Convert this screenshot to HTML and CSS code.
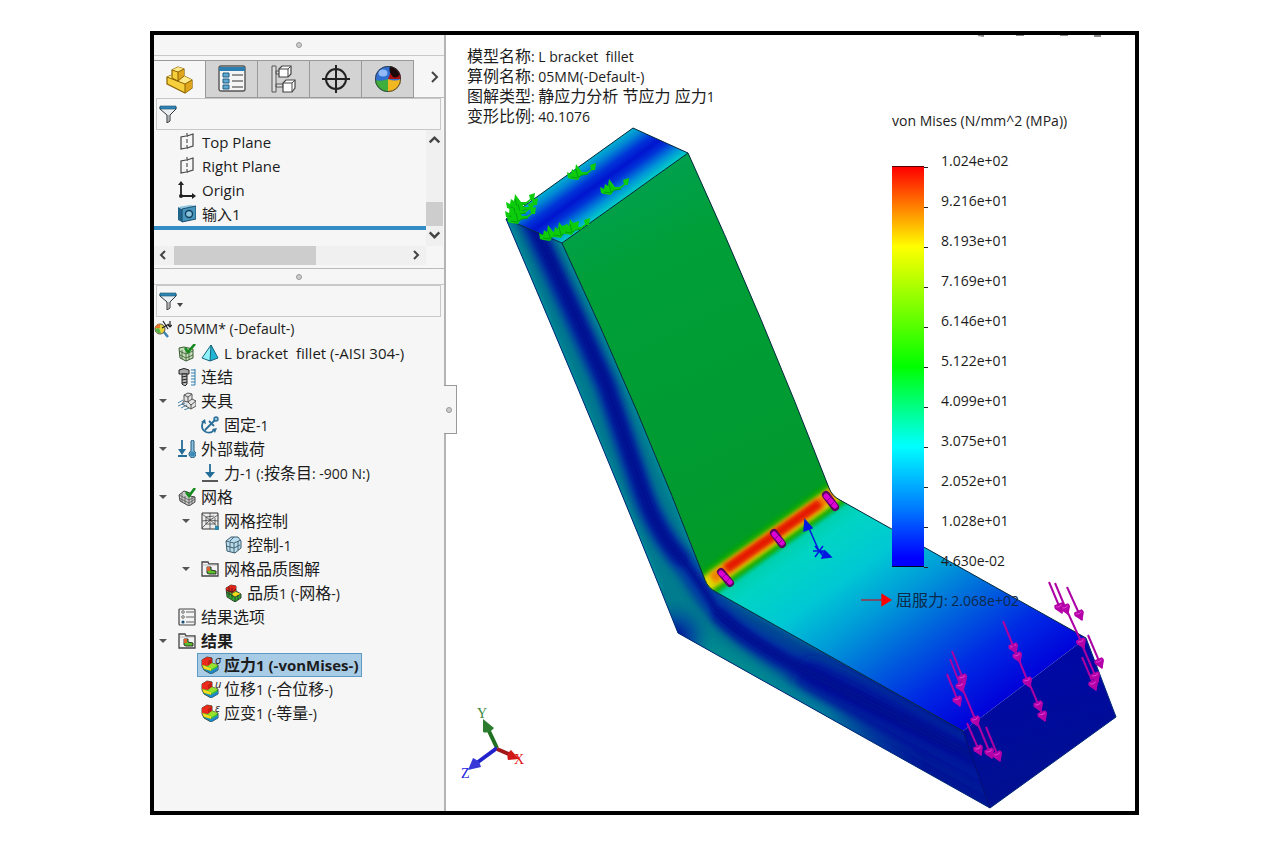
FILE: index.html
```html
<!DOCTYPE html>
<html lang="zh-CN">
<head>
    <meta charset="UTF-8">
    <meta name="viewport" content="width=device-width, initial-scale=1.0">
    <title>L bracket fillet</title>
    <link rel="stylesheet" href="styles.css">
</head>
<body>
    <!-- Icon sprite -->
    <svg class="sprite" aria-hidden="true">
        <symbol id="i-part" viewBox="0 0 28 28">
            <path d="M6 4l6-3 6 2v7l8 4v8l-7 5L1 18v-7l5-2z" fill="#f6cf3c" stroke="#8a6200" stroke-width="1.2" stroke-linejoin="round"/>
            <path d="M6 4l6-3 6 2-6 3zM1 11l5-2v3l6 3 6-5 8 4-7 4z" fill="#fde98a"/>
            <path d="M19 18l7-4v8l-7 5zM12 6l6-3v7l-6 5z" fill="#dfa51c"/>
            <path d="M6 4l6 2v9M12 6l6-3M1 11l18 7v9M19 18l7-4M6 9v3l6 3 6-5" fill="none" stroke="#8a6200"/>
        </symbol>
        <symbol id="i-list" viewBox="0 0 28 28">
            <rect x="1" y="1" width="26" height="25" rx="2" fill="#f4f4f4" stroke="#555" stroke-width="1.4"/>
            <path d="M1 2h26v4H1z" fill="#2a7fb0"/>
            <path d="M5 8h6v4H5zM5 14h6v4H5zM5 20h6v4H5z" fill="#5fa8cf" stroke="#1f5c85"/>
            <path d="M14 10h11M14 16h11M14 22h11" stroke="#333" stroke-width="1.2"/>
        </symbol>
        <symbol id="i-config" viewBox="0 0 28 28">
            <path d="M2 1h4v26H2zM6 6h5v3H6zM6 19h7v3H6z" fill="#ddd" stroke="#555"/>
            <path d="M9 4l3-3h9v8l-3 3H9zM13 18l3-3h9v8l-3 4h-9z" fill="#fff" stroke="#444" stroke-width="1.2"/>
            <path d="M9 4h9v8M18 4l3-3M13 18h9v9M22 18l3-3" fill="none" stroke="#444"/>
        </symbol>
        <symbol id="i-target" viewBox="0 0 28 28">
            <circle cx="14" cy="14" r="10" fill="none" stroke="#222" stroke-width="2"/>
            <path d="M14 0v28M0 14h28" stroke="#222" stroke-width="2"/>
        </symbol>
        <symbol id="i-sphere" viewBox="0 0 28 28">
            <circle cx="14" cy="14" r="13" fill="#2f6fd0"/>
            <path d="M14 14L19 2a13 13 0 0 1 8 12z" fill="#b01010"/>
            <path d="M16 1a13 13 0 0 1 10 8q-3 5-7 3-5-5-3-11z" fill="#1b0808"/>
            <path d="M1 15q7 2 13-1v13A13 13 0 0 1 1 15z" fill="#3fae3c"/>
            <path d="M14 14q7 3 13 0a13 13 0 0 1-13 13z" fill="#f2b822"/>
            <ellipse cx="9" cy="8" rx="4.5" ry="3.5" fill="#a9ccff" opacity=".8"/>
            <circle cx="14" cy="14" r="12.6" fill="none" stroke="#333" stroke-width=".8"/>
        </symbol>
        <symbol id="i-filter" viewBox="0 0 18 18">
            <path d="M1 2h16v2l-6 6v6l-3 2v-8L1 4z" fill="#e8eef2" stroke="#333" stroke-linejoin="round"/>
            <path d="M1 1h16v3H1z" fill="#2d86b5" stroke="#1c4f6c" stroke-width=".6"/>
            <path d="M9 10v7" stroke="#777"/>
        </symbol>
        <symbol id="i-plane" viewBox="0 0 18 18">
            <path d="M8 3L3 4v12l5-1M9 3l6-2v12l-6 2" fill="none" stroke="#444" stroke-width="1.2"/>
            <path d="M9 0v18" stroke="#333" stroke-dasharray="4 2"/>
        </symbol>
        <symbol id="i-origin" viewBox="0 0 18 18">
            <path d="M3 3v12h12" fill="none" stroke="#222" stroke-width="1.8"/>
            <path d="M0 4l3-4 3 4zM14 12l4 3-4 3z" fill="#222"/>
            <circle cx="3" cy="15" r="2" fill="#222"/>
        </symbol>
        <symbol id="i-import" viewBox="0 0 18 18">
            <path d="M0 2l4 2v13l-4-2z" fill="#22658c"/>
            <path d="M0 2l12-2 6 1-14 3z" fill="#8cc4de"/>
            <path d="M4 4l14-3v13L4 17z" fill="#4795bd" stroke="#174d6d"/>
            <circle cx="11" cy="9" r="3.5" fill="#8cc4de" stroke="#123f5c" stroke-width="1.4"/>
        </symbol>
        <symbol id="i-study" viewBox="0 0 18 18">
            <path d="M9 11l5 6" stroke="#3b82b5" stroke-width="2.5"/>
            <circle cx="6" cy="9" r="5" fill="#e8d43a" stroke="#555"/>
            <path d="M1 8a5 5 0 0 1 5-4v4z" fill="#e8762a"/>
            <path d="M1 9l4-1 2 5a5 5 0 0 1-6-4z" fill="#59b54a"/>
            <path d="M9 1l5 8M8 8l7-4M16 1v6M14 5l2 2 2-2" fill="none" stroke="#222" stroke-width="1.2"/>
        </symbol>
        <symbol id="i-solid" viewBox="0 0 18 18">
            <path d="M1 4l5-1 9 2v9l-7 3-6-3z" fill="#c4dcb8" stroke="#3d5c34"/>
            <path d="M1 7l7 3 7-3M2 11l6 3 7-3M4 6v9M8 7v10M11 6v9" fill="none" stroke="#3d5c34" stroke-width=".8"/>
            <path d="M7 4l3 4 7-8" fill="none" stroke="#168a1e" stroke-width="2.6"/>
        </symbol>
        <symbol id="i-tetra" viewBox="0 0 18 18">
            <path d="M10 1L1 14l8 3z" fill="#8ff2fa"/>
            <path d="M10 1l7 13-8 3z" fill="#22b4d4"/>
            <path d="M10 1L1 14l8 3 8-3zM10 1L9 17" fill="none" stroke="#14637a"/>
        </symbol>
        <symbol id="i-bolt" viewBox="0 0 18 18">
            <path d="M1 2q5-3 10 0v4H1z" fill="#aaa" stroke="#222"/>
            <path d="M4 6h5v10l-2 2-3-2z" fill="#bbb" stroke="#222"/>
            <path d="M4 9l5-1M4 12l5-1M4 15l5-1" stroke="#222"/>
            <path d="M17 1v16M13 2h4M13 5h4M13 8h4M13 11h4M13 14h4M13 17h4" stroke="#2e7fae"/>
        </symbol>
        <symbol id="i-fixture" viewBox="0 0 18 18">
            <path d="M6 3l4-2 4 1v5l4 2v5l-5 3-9-5 2-3z" fill="#e3e3e3" stroke="#555"/>
            <path d="M6 3l4 2v5l3 3v4M10 5l4-3M13 13l5-4M6 9l4 1 4-3" fill="none" stroke="#555"/>
            <path d="M0 11l5-3M0 14l7-3M3 16l6-3M6 18l5-2" stroke="#4b84a6"/>
        </symbol>
        <symbol id="i-fixed" viewBox="0 0 18 18">
            <path d="M2 6Q-1 13 5 16q5 2 8-2M4 14L16 2" fill="none" stroke="#2b6f99" stroke-width="1.8"/>
            <path d="M8 5l5 5" stroke="#2b6f99" stroke-width="1.8"/>
            <path d="M0 6l4-3 1 5zM11 13l5-1-2 5z" fill="#2b6f99"/>
            <circle cx="15" cy="3" r="2" fill="#9cc4dc" stroke="#2b6f99" stroke-width="1.4"/>
        </symbol>
        <symbol id="i-loads" viewBox="0 0 18 18">
            <path d="M4 0v13M0 16h9" stroke="#246d98" stroke-width="1.8"/>
            <path d="M0 9h8l-4 6z" fill="#246d98"/>
            <path d="M13 1q2-2 3 0v10a3.5 3.5 0 1 1-3 0z" fill="#8bbdd8" stroke="#225d80"/>
            <circle cx="14.5" cy="14" r="2.5" fill="#3b89b6"/>
        </symbol>
        <symbol id="i-force" viewBox="0 0 18 18">
            <path d="M9 0v12" stroke="#246d98" stroke-width="1.8"/>
            <path d="M4 8h10l-5 6z" fill="#246d98"/>
            <path d="M1 17h16" stroke="#333" stroke-width="1.6"/>
        </symbol>
        <symbol id="i-mesh" viewBox="0 0 18 18">
            <path d="M1 7l5-4 6 2v3l5 1v5l-6 4-9-5z" fill="#ccc" stroke="#444"/>
            <path d="M1 10l10 5 6-4M4 5v9M7 8v8M11 10v8M14 9v7M1 7l10 5 6-3" fill="none" stroke="#555" stroke-width=".8"/>
            <path d="M8 4l3 4 6-8" fill="none" stroke="#168a1e" stroke-width="2.6"/>
        </symbol>
        <symbol id="i-control" viewBox="0 0 18 18">
            <path d="M1 1h16v16H1z" fill="#eee" stroke="#333"/>
            <path d="M1 2l8 6 8-5M9 8l-4 4-4 4M9 8l5 4 3 5M9 8V1M9 8l-8 1M9 8l8 1M9 8v9M5 5l8-1M5 5v7h9V6" fill="none" stroke="#444" stroke-width=".8"/>
            <path d="M14 14h4v4h-4z" fill="#2e87a8"/>
        </symbol>
        <symbol id="i-cube" viewBox="0 0 18 18">
            <path d="M2 5l5-4h7l3 4v7l-6 5-8-2z" fill="#b9dcec" stroke="#3b5a6c"/>
            <path d="M2 5l8 2v10M10 7l7-3M6 6v9M14 5v9M2 10l8 2 6-3M6 5l4-4" fill="none" stroke="#3b5a6c" stroke-width=".9"/>
        </symbol>
        <symbol id="i-folder" viewBox="0 0 18 18">
            <path d="M1 16V2h6l1 2h9v12z" fill="#f2f2f2" stroke="#444" stroke-width="1.3"/>
            <path d="M2 5h14" stroke="#bbb"/>
            <path d="M6 7h4v3l5 1v3H8l-2-1z" fill="#5cc02c" stroke="#222" stroke-width=".9"/>
            <path d="M6 7h3v4H6z" fill="#e0622a"/>
        </symbol>
        <symbol id="i-plot" viewBox="0 0 18 18">
            <path d="M1 4l5-3 5 1v5l6 2v5l-7 4-7-4-2-4z" fill="#3cc434" stroke="#222" stroke-width=".8"/>
            <path d="M1 4l5-3 5 1-4 3v5L1 9z" fill="#ec2a1c"/>
            <path d="M7 5l4-3v5l-4 3z" fill="#c81c14"/>
            <path d="M1 9l6 2 3 1v3l-7-2z" fill="#f4dc1c"/>
            <path d="M7 10l4-3 6 2-6 4z" fill="#9be02c"/>
            <path d="M3 13l7 2 7-4v3l-7 4z" fill="#1f86cc"/>
        </symbol>
        <symbol id="i-quality" viewBox="0 0 18 18">
            <path d="M2 4l5-3 5 1v5l5 3v4l-6 4-8-5z" fill="#2fae33" stroke="#222" stroke-width=".8"/>
            <path d="M2 4l5-3 5 1v5l-4 2-6-2z" fill="#e32219"/>
            <path d="M12 8l5 2-6 3-4-3z" fill="#f4dc1c"/>
            <path d="M2 8l9 5 6-3M2 6l6 2 4-3M5 3v10M8 4v11M11 13v5M14 11v5" fill="none" stroke="#222" stroke-width=".7"/>
        </symbol>
        <symbol id="i-options" viewBox="0 0 18 18">
            <rect x="1" y="1" width="16" height="16" rx="1" fill="#f4f4f4" stroke="#444" stroke-width="1.2"/>
            <path d="M8 4h8M8 9h8M8 14h8" stroke="#aaa" stroke-width="2"/>
            <circle cx="5" cy="4" r="1.3" fill="#fff" stroke="#444" stroke-width=".8"/>
            <circle cx="5" cy="9" r="1.3" fill="#fff" stroke="#444" stroke-width=".8"/>
            <circle cx="5" cy="14" r="1.6" fill="#1c4f73"/>
        </symbol>
    </svg>

    <main class="app">
        <aside class="panel">
            <div class="grip"><i></i></div>

            <nav class="tabs">
                <button class="tab active" aria-label="FeatureManager"><svg><use href="#i-part"/></svg></button>
                <button class="tab" aria-label="PropertyManager"><svg><use href="#i-list"/></svg></button>
                <button class="tab" aria-label="ConfigurationManager"><svg><use href="#i-config"/></svg></button>
                <button class="tab" aria-label="DimXpertManager"><svg><use href="#i-target"/></svg></button>
                <button class="tab" aria-label="DisplayManager"><svg><use href="#i-sphere"/></svg></button>
                <button class="more" aria-label="More"><svg viewBox="0 0 10 12"><path d="M2 1l5 5-5 5"/></svg></button>
            </nav>

            <label class="filter">
                <svg><use href="#i-filter"/></svg>
                <input type="text" aria-label="Filter features">
            </label>

            <div class="features">
                <ul class="feature-list">
                    <li><svg class="icon"><use href="#i-plane"/></svg>Top Plane</li>
                    <li><svg class="icon"><use href="#i-plane"/></svg>Right Plane</li>
                    <li><svg class="icon"><use href="#i-origin"/></svg>Origin</li>
                    <li><svg class="icon"><use href="#i-import"/></svg>输入1</li>
                </ul>
                <div class="vscroll">
                    <button aria-label="Up"><svg viewBox="0 0 12 10"><path d="M2 7l4-4 4 4"/></svg></button>
                    <div class="thumb"></div>
                    <button aria-label="Down"><svg viewBox="0 0 12 10"><path d="M2 2l4 4 4-4"/></svg></button>
                </div>
            </div>
            <div class="hscroll">
                <button aria-label="Left"><svg viewBox="0 0 10 12"><path d="M6 2L2 6l4 4"/></svg></button>
                <div class="thumb"></div>
                <button aria-label="Right"><svg viewBox="0 0 10 12"><path d="M3 2l4 4-4 4"/></svg></button>
            </div>

            <div class="grip lower"><i></i></div>

            <label class="filter">
                <svg><use href="#i-filter"/></svg>
                <span class="caret"></span>
                <input type="text" aria-label="Filter study">
            </label>

            <div class="study">
                <div class="root"><svg class="icon"><use href="#i-study"/></svg><span class="lat">05MM* (-Default-)</span></div>
                <ul class="tree">
                    <li>
                        <div class="node"><span class="label part"><svg class="icon"><use href="#i-solid"/></svg><svg class="icon"><use href="#i-tetra"/></svg><span class="lat">L bracket  fillet (-AISI 304-)</span></span></div>
                    </li>
                    <li>
                        <div class="node"><span class="label"><svg class="icon"><use href="#i-bolt"/></svg><span>连结</span></span></div>
                    </li>
                    <li>
                        <div class="node"><button class="toggle" aria-label="夹具"></button><span class="label"><svg class="icon"><use href="#i-fixture"/></svg><span>夹具</span></span></div>
                        <ul>
                            <li><div class="node"><span class="label"><svg class="icon"><use href="#i-fixed"/></svg><span>固定<span class="lat">-1</span></span></span></div></li>
                        </ul>
                    </li>
                    <li>
                        <div class="node"><button class="toggle" aria-label="外部载荷"></button><span class="label"><svg class="icon"><use href="#i-loads"/></svg><span>外部载荷</span></span></div>
                        <ul>
                            <li><div class="node"><span class="label"><svg class="icon"><use href="#i-force"/></svg><span>力<span class="lat">-1 (:</span>按条目<span class="lat">: -900 N:)</span></span></span></div></li>
                        </ul>
                    </li>
                    <li>
                        <div class="node"><button class="toggle" aria-label="网格"></button><span class="label"><svg class="icon"><use href="#i-mesh"/></svg><span>网格</span></span></div>
                        <ul>
                            <li>
                                <div class="node"><button class="toggle" aria-label="网格控制"></button><span class="label"><svg class="icon"><use href="#i-control"/></svg><span>网格控制</span></span></div>
                                <ul>
                                    <li><div class="node"><span class="label"><svg class="icon"><use href="#i-cube"/></svg><span>控制<span class="lat">-1</span></span></span></div></li>
                                </ul>
                            </li>
                            <li>
                                <div class="node"><button class="toggle" aria-label="网格品质图解"></button><span class="label"><svg class="icon"><use href="#i-folder"/></svg><span>网格品质图解</span></span></div>
                                <ul>
                                    <li><div class="node"><span class="label"><svg class="icon"><use href="#i-quality"/></svg><span>品质<span class="lat">1 (-</span>网格<span class="lat">-)</span></span></span></div></li>
                                </ul>
                            </li>
                        </ul>
                    </li>
                    <li>
                        <div class="node"><span class="label"><svg class="icon"><use href="#i-options"/></svg><span>结果选项</span></span></div>
                    </li>
                    <li>
                        <div class="node"><button class="toggle" aria-label="结果"></button><span class="label bold"><svg class="icon"><use href="#i-folder"/></svg><span>结果</span></span></div>
                        <ul>
                            <li><div class="node"><span class="label bold selected"><svg class="icon"><use href="#i-plot"/></svg><sup>σ</sup><span>应力<span class="lat">1 (-vonMises-)</span></span></span></div></li>
                            <li><div class="node"><span class="label"><svg class="icon"><use href="#i-plot"/></svg><sup>u</sup><span>位移<span class="lat">1 (-</span>合位移<span class="lat">-)</span></span></span></div></li>
                            <li><div class="node"><span class="label"><svg class="icon"><use href="#i-plot"/></svg><sup>ε</sup><span>应变<span class="lat">1 (-</span>等量<span class="lat">-)</span></span></span></div></li>
                        </ul>
                    </li>
                </ul>
            </div>
        </aside>

        <section class="viewport">
            <button class="splitter" aria-label="Collapse"><i></i></button>

            <!-- Deformed bracket with stress contours -->
            <svg class="model" viewBox="446 35 689 775" preserveAspectRatio="xMinYMin meet">
                <defs>
                    <linearGradient id="g-top" gradientUnits="userSpaceOnUse" x1="569" y1="173" x2="599" y2="215">
                        <stop offset="0" stop-color="#00b4cf"/><stop offset=".15" stop-color="#0086d4"/>
                        <stop offset=".34" stop-color="#0034d8"/><stop offset=".5" stop-color="#0014cf"/>
                        <stop offset=".64" stop-color="#0034d8"/><stop offset=".85" stop-color="#0094d8"/>
                        <stop offset="1" stop-color="#00c8c8"/>
                    </linearGradient>
                    <linearGradient id="g-web" gradientUnits="userSpaceOnUse" x1="610" y1="190" x2="770" y2="540">
                        <stop offset="0" stop-color="#00a04e"/><stop offset=".2" stop-color="#009f38"/>
                        <stop offset=".8" stop-color="#009a30"/><stop offset="1" stop-color="#009c24"/>
                    </linearGradient>
                    <linearGradient id="g-floor" gradientUnits="userSpaceOnUse" x1="716" y1="592" x2="864" y2="801">
                        <stop offset="0" stop-color="#00cfa8"/><stop offset=".08" stop-color="#00d4c4"/>
                        <stop offset=".25" stop-color="#00c8d4"/><stop offset=".42" stop-color="#009cd8"/>
                        <stop offset=".6" stop-color="#0064dc"/><stop offset=".8" stop-color="#0028e4"/>
                        <stop offset="1" stop-color="#0000d8"/>
                    </linearGradient>
                    <linearGradient id="g-side" gradientUnits="userSpaceOnUse" x1="740" y1="620" x2="940" y2="735">
                        <stop offset="0" stop-color="#007c8e"/><stop offset=".4" stop-color="#006898"/>
                        <stop offset=".75" stop-color="#00309c"/><stop offset="1" stop-color="#001490"/>
                    </linearGradient>
                    <linearGradient id="g-edge" gradientUnits="userSpaceOnUse" x1="740" y1="668" x2="930" y2="775">
                        <stop offset="0" stop-color="#008a90"/><stop offset=".45" stop-color="#00789c"/>
                        <stop offset="1" stop-color="#001ea0" stop-opacity="0"/>
                    </linearGradient>
                    <radialGradient id="g-corner" gradientUnits="userSpaceOnUse" cx="674" cy="638" r="40">
                        <stop offset=".15" stop-color="#00189c"/><stop offset=".5" stop-color="#0048a0" stop-opacity=".8"/>
                        <stop offset="1" stop-color="#007090" stop-opacity="0"/>
                    </radialGradient>
                    <linearGradient id="g-end" gradientUnits="userSpaceOnUse" x1="1030" y1="670" x2="1060" y2="780">
                        <stop offset="0" stop-color="#0008a4"/><stop offset="1" stop-color="#001090"/>
                    </linearGradient>
                    <filter id="b2" filterUnits="userSpaceOnUse" x="440" y="30" width="740" height="860"><feGaussianBlur stdDeviation="2"/></filter>
                    <filter id="b4" filterUnits="userSpaceOnUse" x="440" y="30" width="740" height="860"><feGaussianBlur stdDeviation="4"/></filter>
                    <filter id="b8" filterUnits="userSpaceOnUse" x="440" y="30" width="740" height="860"><feGaussianBlur stdDeviation="8"/></filter>
                    <clipPath id="c-side"><path d="M506 219L562 243Q640 410 705 580Q708 588 716 592L963 731L990 808L678 633Q605 450 506 219z"/></clipPath>
                    <clipPath id="c-inner"><path d="M562 243L688 153Q762 315 829 488Q832 496 840 500L1086 638L963 731L716 592Q708 588 705 580Q640 410 562 243z"/></clipPath>
                    <marker id="m-load" markerUnits="userSpaceOnUse" markerWidth="16" markerHeight="14" refX="11" refY="6" orient="auto">
                        <path d="M1 2Q4 0 6 2L12 6L6 10Q4 12 1 10z" fill="#b400a8"/>
                        <path d="M3 3q2 3 0 6" fill="none" stroke="#e040d0"/>
                    </marker>
                    <g id="fix">
                        <path d="M-12 4l-1-6 4 2 1-5 3 2 1-7 6 8 5 0 4-3-1-4 6-2-1 7-3 0-6 5-5 0-3 5-7-1z" fill="#0ccc0c"/>
                        <path d="M-9 3l6 1 5-3 6-1M-4-5l2 8" fill="none" stroke="#00a010"/>
                    </g>
                </defs>

                <path d="M978 35l6 1M1016 35h8M1060 35h8M1094 36h7" stroke="#888" stroke-width="2"/>

                <path d="M506 219L633 128L688 153L562 243z" fill="url(#g-top)"/>

                <g clip-path="url(#c-side)">
                    <path d="M480 180H1020V830H480z" fill="url(#g-side)"/>
                    <path d="M490 180Q597 436 660 590" fill="none" stroke="#008c9c" stroke-width="6" filter="url(#b2)"/>
                    <path d="M545 205Q640 410 705 580Q708 588 716 592L820 650" fill="none" stroke="#00889a" stroke-width="6" filter="url(#b2)"/>
                    <path d="M700 590L716 588L1020 758V840L840 735z" fill="#001c98" opacity=".55" filter="url(#b8)"/>
                    <path d="M515 190Q572 310 606 386L642 492Q658 535 687 567Q706 596 718 610Q740 636 787 660L853 693L1040 790" fill="none" stroke="#0038a4" stroke-width="23" filter="url(#b4)"/>
                    <path d="M800 672L853 697L1040 800" fill="none" stroke="#00169c" stroke-width="34" filter="url(#b8)"/>
                    <path d="M517 190Q574 310 607 386L643 492Q658 535 684 562M716 612Q740 636 787 661L853 695L1040 790" fill="none" stroke="#000c90" stroke-width="11" filter="url(#b4)"/>
                    <path d="M517 190Q574 310 607 386L643 492Q658 535 684 562Q704 588 716 610Q740 634 787 661L853 695L1040 790" fill="none" stroke="#000c90" stroke-width="6" filter="url(#b2)"/>
                    <path d="M692 640L930 774" stroke="url(#g-edge)" stroke-width="20" filter="url(#b4)"/>
                    <path d="M630 590h100v90H630z" fill="url(#g-corner)"/>
                </g>

                <g clip-path="url(#c-inner)">
                    <path d="M540 140H860V620H540z" fill="url(#g-web)"/>
                    <path d="M706 586L834 496L1100 630L963 745z" fill="url(#g-floor)"/>
                    <path d="M698 590L842 489" stroke="#10a800" stroke-width="27" filter="url(#b2)"/>
                    <path d="M698 590L842 489" stroke="#e0d800" stroke-width="16" filter="url(#b2)"/>
                    <path d="M712 579L834 493" stroke="#f08000" stroke-width="11" filter="url(#b2)"/>
                    <path d="M726 569L820 503" stroke="#e41800" stroke-width="9" filter="url(#b2)"/>
                </g>

                <path d="M963 731L1086 638L1116 717L990 808z" fill="url(#g-end)"/>

                <g fill="none" stroke="#04283c">
                    <path d="M506 219L633 128L688 153L562 243zM562 243Q640 410 705 580Q708 588 716 592L963 731"/>
                    <path d="M688 153Q762 315 829 488Q832 496 840 500L1086 638"/>
                    <path d="M506 219Q605 450 678 633L990 808L1116 717L1086 638" stroke="#002878"/>
                    <path d="M963 731L990 808" stroke="#000c70"/>
                </g>

                <!-- Fixtures on the top face -->
                <use href="#fix" x="580" y="174"/>
                <use href="#fix" x="613" y="189"/>
                <use href="#fix" x="519" y="204"/>
                <use href="#fix" x="522" y="209"/>
                <use href="#fix" x="518" y="213"/>
                <use href="#fix" x="520" y="218"/>
                <use href="#fix" x="552" y="235"/>
                <use href="#fix" x="563" y="232"/>
                <use href="#fix" x="574" y="229"/>

                <!-- Pins along the fillet -->
                <g stroke-linecap="round">
                    <path d="M721 572L730 583M774 533L782 544M826 495L835 507" stroke="#5c0060" stroke-width="8"/>
                    <path d="M721 573L730 582M774 534L782 543M826 496L835 506" stroke="#dc00d4" stroke-width="5"/>
                    <path d="M722 578l4-4M726 582l4-4M775 539l4-4M779 543l4-4M827 501l4-4M831 505l4-4" stroke="#8c0090"/>
                </g>

                <g stroke="#0018e0" stroke-width="1.5" fill="#0018e0">
                    <path d="M819 551L808 526M819 551L826 554M813 551h12M815 546l9 11M823 546l-8 11"/>
                    <path d="M805 520L812 528L804 531zM831 557L822 558L825 551z"/>
                </g>

                <!-- Applied force -->
                <g class="force">
                    <path d="M1049 582L1062 613"/>
                    <path d="M1055 583L1068 614"/>
                    <path d="M1067 587L1082 620"/>
                    <path d="M1068 613L1084 648"/>
                    <path d="M1088 635L1102 668"/>
                    <path d="M1082 645L1098 682"/>
                    <path d="M1082 657L1096 690"/>
                    <path d="M1003 621L1016 653"/>
                    <path d="M1013 645L1020 662"/>
                    <path d="M1019 660L1030 687"/>
                    <path d="M1030 685L1041 711"/>
                    <path d="M1039 706L1045 721"/>
                    <path d="M952 651L965 684"/>
                    <path d="M950 659L963 692"/>
                    <path d="M947 674L960 706"/>
                    <path d="M963 690L978 726"/>
                    <path d="M967 723L981 755"/>
                    <path d="M978 724L992 758"/>
                    <path d="M986 727L1000 761"/>
                </g>

                <!-- Axis triad -->
                <path d="M497 748L488 729" stroke="#207020" stroke-width="4"/>
                <path d="M483 719L494 728Q489 734 483 732z" fill="#2c7c30"/>
                <path d="M497 748L478 762" stroke="#2222cc" stroke-width="4"/>
                <path d="M468 770L473 758Q480 761 481 767z" fill="#3838d8"/>
                <path d="M497 749L511 755" stroke="#a01818" stroke-width="4"/>
                <path d="M519 759L511 750Q506 754 508 760z" fill="#d01818"/>
                <g class="axis">
                    <text x="477" y="718" fill="#3a8a3a">Y</text>
                    <text x="514" y="764" fill="#e01010">X</text>
                    <text x="461" y="778" fill="#2222dd">Z</text>
                </g>
            </svg>

            <div class="info">
                <p>模型名称<span class="lat">: L bracket  fillet</span></p>
                <p>算例名称<span class="lat">: 05MM(-Default-)</span></p>
                <p>图解类型<span class="lat">: </span>静应力分析 节应力 应力<span class="lat">1</span></p>
                <p>变形比例<span class="lat">: 40.1076</span></p>
            </div>

            <div class="legend">
                <h2>von Mises (N/mm^2 (MPa))</h2>
                <div class="scale">
                    <div class="bar"></div>
                    <ol>
                        <li>1.024e+02</li>
                        <li>9.216e+01</li>
                        <li>8.193e+01</li>
                        <li>7.169e+01</li>
                        <li>6.146e+01</li>
                        <li>5.122e+01</li>
                        <li>4.099e+01</li>
                        <li>3.075e+01</li>
                        <li>2.052e+01</li>
                        <li>1.028e+01</li>
                        <li>4.630e-02</li>
                    </ol>
                </div>
                <p class="yield">
                    <svg viewBox="0 0 32 16"><path d="M0 8h22" stroke="#a03040" stroke-width="1.5"/><path d="M21 1l11 7-11 7z" fill="#f00"/></svg>
                    <span>屈服力<span class="lat">: 2.068e+02</span></span>
                </p>
            </div>
        </section>
    </main>
</body>
</html>
```
FILE: styles.css
```css
* {
    box-sizing: border-box;
}

body {
    margin: 0;
    padding: 31px 148px 44px 150px;
    min-height: 100vh;
    display: flex;
    background-color: #fff;
    color: #1c1c1c;
    font-family: 'Open Sans', 'Noto Sans CJK SC', sans-serif;
    font-size: 16px;
    line-height: 24px;
}

ul, ol, p, h2 {
    margin: 0;
    padding: 0;
    list-style: none;
}

button {
    margin: 0;
    padding: 0;
    border: none;
    background: none;
    cursor: pointer;
}

.sprite {
    position: absolute;
    width: 0;
    height: 0;
}

.lat {
    font-size: 14px;
}

.icon {
    flex: none;
    width: 18px;
    height: 18px;
}

/* Window */
.app {
    flex: 1;
    display: flex;
    border: 4px solid #000;
}

/* Left panel */
.panel {
    flex: none;
    width: 292px;
    background-color: #f6f6f6;
    border-right: 2px solid #b4b4b4;
}

.grip {
    height: 21px;
    display: flex;
    align-items: center;
    justify-content: center;
    border-bottom: 1px solid #c8c8c8;
}

.grip i,
.splitter i {
    width: 6px;
    height: 6px;
    border: 1px solid #999;
    border-radius: 50%;
    background-color: #ccc;
}

.grip.lower {
    height: 17px;
    margin-top: 3px;
    border-top: 1px solid #bbb;
}

/* Tabs */
.tabs {
    display: flex;
    height: 38px;
    margin-top: 4px;
}

.tab {
    width: 52px;
    display: flex;
    align-items: center;
    justify-content: center;
    background-color: #d3d3d3;
    border: 1px solid #999;
    border-left: none;
}

.tab.active {
    background-color: #f6f6f6;
    border-bottom: none;
}

.tab svg {
    width: 28px;
    height: 28px;
}

.more {
    flex: 1;
    padding-left: 12px;
    border-bottom: 1px solid #bbb;
}

.more svg,
.hscroll svg {
    width: 10px;
    height: 12px;
}

.more path,
.vscroll path,
.hscroll path {
    fill: none;
    stroke: #444;
    stroke-width: 2;
}

/* Filter boxes */
.filter {
    display: flex;
    align-items: center;
    height: 32px;
    margin: 0 3px 0 2px;
    padding-left: 2px;
    border: 1px solid #c8c8c8;
}

.filter svg {
    flex: none;
    width: 18px;
    height: 18px;
}

.filter input {
    flex: 1;
    min-width: 0;
    border: none;
    outline: none;
    background: none;
}

.caret {
    margin-top: 8px;
    border: 3px solid transparent;
    border-top: 4px solid #444;
    border-bottom: none;
}

/* Feature tree */
.features {
    display: flex;
    height: 116px;
}

.feature-list {
    flex: 1;
    height: 100px;
    border-bottom: 4px solid #338cc6;
}

.feature-list li {
    display: flex;
    align-items: center;
    gap: 6px;
    height: 24px;
    padding-left: 24px;
    font-size: 15px;
}

.vscroll {
    width: 17px;
    margin-right: 1px;
    display: flex;
    flex-direction: column;
    background-color: #f0f0f0;
}

.vscroll button,
.vscroll svg {
    display: block;
    width: 17px;
    height: 12px;
}

.vscroll button {
    height: 20px;
}

.vscroll .thumb {
    height: 24px;
    margin: auto 0 0;
    background-color: #cdcdcd;
}

.hscroll {
    display: flex;
    align-items: center;
    height: 19px;
    margin-right: 18px;
    background-color: #f0f0f0;
}

.hscroll button {
    width: 20px;
    line-height: 12px;
}

.hscroll .thumb {
    width: 142px;
    height: 19px;
    margin-right: auto;
    background-color: #cdcdcd;
}

/* Study tree */
.root,
.node,
.label {
    display: flex;
    align-items: center;
    height: 24px;
    white-space: pre;
}

.root {
    gap: 5px;
}

.tree ul {
    padding-left: 23px;
}

.node {
    padding-left: 20px;
    position: relative;
}

.toggle {
    position: absolute;
    left: 5px;
    width: 8px;
    height: 4px;
}

.toggle::before {
    content: '';
    display: block;
    border: 4px solid transparent;
    border-top: 4px solid #555;
    border-bottom: none;
}

.label {
    position: relative;
    gap: 5px;
    padding: 0 3px;
    border: 1px solid transparent;
}

.label sup {
    position: absolute;
    left: 17px;
    top: 0;
    font: italic 11px/11px 'Open Sans', sans-serif;
}

.bold {
    font-weight: bold;
}

.part .lat,
.bold .lat {
    font-size: 15px;
}

.selected {
    background-color: #a8cbe6;
    border-color: #5d9ac4;
}

/* Graphics area */
.viewport {
    flex: 1;
    position: relative;
    display: flex;
    justify-content: space-between;
    background-color: #fff;
}

.model {
    position: absolute;
    left: 0;
    top: 0;
    width: 100%;
    height: 100%;
}

.force path {
    stroke: #ac00a4;
    stroke-width: 2;
    marker-end: url(#m-load);
}

.axis {
    font: 14px 'Liberation Serif', serif;
}

.splitter {
    position: absolute;
    left: -2px;
    top: 350px;
    width: 13px;
    height: 49px;
    display: flex;
    align-items: center;
    padding-left: 2px;
    background-color: #f6f6f6;
    border: 1px solid #999;
    border-left: none;
}

.info {
    position: relative;
    padding: 11px 0 0 21px;
    line-height: 20px;
}

.info p {
    height: 20px;
    white-space: pre;
}

/* Color legend */
.legend {
    position: relative;
    width: 274px;
    padding-top: 76px;
}

.legend h2 {
    padding-left: 31px;
    font-size: 14px;
    font-weight: normal;
    line-height: 20px;
}

.scale {
    display: flex;
    margin-top: 20px;
    padding-left: 31px;
}

.bar {
    width: 32px;
    height: 401px;
    margin-top: 15px;
    border-top: 1px solid #500;
    border-bottom: 1px solid #002;
    background: linear-gradient(#f00, #ff8000 10%, #ff0 20%, #8f0 34%, #0f0 50%, #00ff80 60%, #0ff 70%, #0080ff 85%, #00f 98%);
}

.scale li {
    height: 40px;
    display: flex;
    gap: 13px;
    font-size: 14px;
    line-height: 20px;
}

.scale li::before {
    content: '';
    width: 4px;
    height: 16px;
    border-bottom: 1px solid #222;
}

.yield {
    display: flex;
    align-items: center;
    gap: 4px;
    height: 20px;
    line-height: 20px;
    margin-top: -1px;
    color: #0c2a4a;
}

.yield svg {
    width: 31px;
    height: 16px;
}
```
